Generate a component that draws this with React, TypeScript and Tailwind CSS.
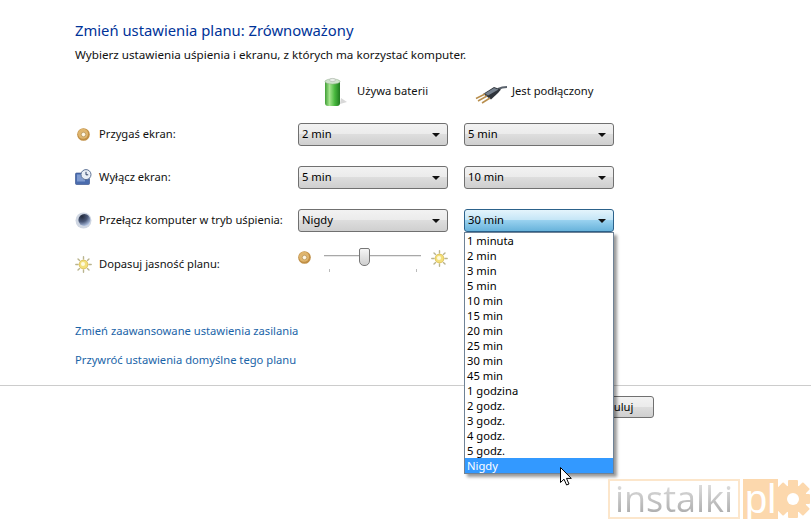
const FONT = "font-['Noto_Sans','Open_Sans',sans-serif]";

const plugOptions = [
  '1 minuta', '2 min', '3 min', '5 min', '10 min', '15 min', '20 min', '25 min',
  '30 min', '45 min', '1 godzina', '2 godz.', '3 godz.', '4 godz.', '5 godz.', 'Nigdy',
];

function DimIcon({ size = 13 }: { size?: number }) {
  return (
    <svg width={size} height={size} viewBox="0 0 14 14">
      <circle cx="7" cy="7" r="6.8" fill="#c08f45" />
      <circle cx="6.5" cy="6.3" r="5.4" fill="#dfb56e" />
      <circle cx="7" cy="7" r="2.4" fill="#fff8e6" stroke="#8f6a2c" strokeWidth="0.5" />
    </svg>
  );
}

function ScreenOffIcon() {
  return (
    <svg width="17" height="17" viewBox="0 0 17 17">
      <rect x="0.5" y="4" width="14" height="11.5" rx="1" fill="#4a6cae" stroke="#2f4a86" strokeWidth="0.6" />
      <rect x="2" y="5.5" width="8" height="7" fill="#7f9bd0" />
      <circle cx="11" cy="5.6" r="5" fill="#e8eef6" stroke="#5f7396" strokeWidth="1" />
      <path d="M11 2.8V5.8H13.2" fill="none" stroke="#2b3f66" strokeWidth="1" />
    </svg>
  );
}

function SleepIcon() {
  return (
    <svg width="17" height="17" viewBox="0 0 17 17">
      <defs>
        <radialGradient id="moon" cx="0.3" cy="0.2" r="1">
          <stop offset="0" stopColor="#232a3c" />
          <stop offset="0.45" stopColor="#4a5878" />
          <stop offset="0.85" stopColor="#b6c8e8" />
          <stop offset="1" stopColor="#dfe7f4" />
        </radialGradient>
      </defs>
      <circle cx="8.5" cy="8.5" r="8" fill="#cfd6e2" />
      <circle cx="9.4" cy="8" r="6" fill="url(#moon)" />
    </svg>
  );
}

function SunIcon({ size = 17 }: { size?: number }) {
  return (
    <svg width={size} height={size} viewBox="0 0 17 17">
      <g stroke="#b9b48e" strokeWidth="1.4" strokeLinecap="round">
        <path d="M8.5 0.8V3M8.5 14V16.2M0.8 8.5H3M14 8.5H16.2M3 3L4.6 4.6M12.4 12.4L14 14M14 3L12.4 4.6M4.6 12.4L3 14" />
      </g>
      <circle cx="8.5" cy="8.5" r="4.4" fill="#f3e07c" stroke="#d8b848" strokeWidth="0.8" />
      <circle cx="8" cy="8" r="2" fill="#fffbe0" />
    </svg>
  );
}

function BatteryIcon() {
  return (
    <svg width="24" height="30" viewBox="0 0 24 30">
      <defs>
        <linearGradient id="cell" x1="0" x2="1" y1="0" y2="0">
          <stop offset="0" stopColor="#3f9e35" />
          <stop offset="0.3" stopColor="#a5e58e" />
          <stop offset="0.65" stopColor="#48b83e" />
          <stop offset="1" stopColor="#1f7a1f" />
        </linearGradient>
      </defs>
      <path d="M16 27L23 25L17 21Z" fill="#d8d8d8" />
      <rect x="1" y="3" width="15" height="26" rx="3" fill="url(#cell)" />
      <ellipse cx="8.5" cy="4.5" rx="7.5" ry="2.6" fill="#cfe3cb" stroke="#8eaa88" strokeWidth="0.5" />
      <ellipse cx="8.5" cy="3" rx="3" ry="1.6" fill="#e9efe8" stroke="#a0a8a0" strokeWidth="0.5" />
    </svg>
  );
}

function PlugIcon() {
  return (
    <svg width="34" height="24" viewBox="0 0 34 24">
      <path d="M24 9C27 7.5 30 7 33 7" fill="none" stroke="#5a626c" strokeWidth="2" />
      <path d="M9 14L20 7L27 9.5L24 13L17 19.5Z" fill="#2f343b" />
      <path d="M11 13.5L20 8L24.5 9.5L14 15.5Z" fill="#76818e" />
      <g stroke="#b98f4e" strokeWidth="1.5">
        <path d="M11 14L2 18.5" />
        <path d="M13 16L4 21" />
        <path d="M16 18L8 23" />
      </g>
    </svg>
  );
}

function Select({ value, active = false }: { value: string; active?: boolean }) {
  return (
    <div
      className={`flex h-[23px] w-[150px] items-center justify-between rounded-[3px] border pl-[3px] pr-[6px] text-[11.2px] text-black ${
        active
          ? 'border-[#2c628b] bg-[linear-gradient(#e4f4fc_0%,#c4e5f6_48%,#98d1ef_50%,#68b3db_100%)]'
          : 'border-[#707070] bg-[linear-gradient(#f2f2f2_0%,#ebebeb_48%,#dddddd_50%,#cfcfcf_100%)]'
      }`}
    >
      <span>{value}</span>
      <span className="mr-px h-0 w-0 border-x-[4px] border-t-[4px] border-x-transparent border-t-[#111]" />
    </div>
  );
}

function SettingRow({
  icon,
  label,
  battery,
  plugged,
  active,
}: {
  icon: React.ReactNode;
  label: string;
  battery: string;
  plugged: string;
  active?: boolean;
}) {
  return (
    <div className="flex h-[23px] items-center">
      <div className="flex w-[223px] items-center">
        <span className="flex w-[24px] shrink-0 items-center">{icon}</span>
        <span className="text-[11.2px] text-[#111]">{label}</span>
      </div>
      <Select value={battery} />
      <div className="ml-[16px]">
        <Select value={plugged} active={active} />
      </div>
    </div>
  );
}

function Slider() {
  return (
    <div className="flex w-[150px] items-start">
      <span className="mt-[-1px] shrink-0">
        <DimIcon />
      </span>
      <div className="relative ml-[13px] mt-[3px] h-[20px] w-[97px]">
        <div className="h-[2px] border-t border-[#a8a8a8] bg-[#e8e8e8]" />
        <div className="absolute left-[35px] top-[-7px] h-[18px] w-[11px] rounded-b-[5px] rounded-t-[2px] border border-[#777] bg-[linear-gradient(#f6f6f6,#cfcfcf)]" />
        <div className="absolute left-[5px] top-[14px] h-[3px] w-px bg-[#bbb]" />
        <div className="absolute left-[92px] top-[14px] h-[3px] w-px bg-[#bbb]" />
      </div>
      <span className="ml-[10px] mt-[-2px] shrink-0">
        <SunIcon />
      </span>
    </div>
  );
}

function Watermark() {
  return (
    <div className="absolute left-[608px] top-[479px] flex h-[40px] items-stretch">
      <div className="flex w-[132px] items-center justify-center border-[2px] border-[#fce6cb] font-['Open_Sans',sans-serif] text-[36px] font-normal leading-none">
        <span className="bg-[linear-gradient(#e2e2e2,#a8a8a8)] bg-clip-text text-transparent">instalki</span>
      </div>
      <div className="ml-[3px] flex w-[35px] items-center justify-center bg-[#fcd8ad] font-['Liberation_Sans',sans-serif] text-[40px] leading-none text-white">
        pl
      </div>
      <svg width="33" height="40" viewBox="0 0 33 40">
        <g fill="#fcd8ad">
          <circle cx="15" cy="20" r="14" />
          <rect x="10" y="1" width="10" height="38" rx="1" />
          <rect x="0" y="15" width="32" height="10" rx="1" />
          <rect x="10" y="1" width="10" height="38" rx="1" transform="rotate(45 15 20)" />
          <rect x="10" y="1" width="10" height="38" rx="1" transform="rotate(-45 15 20)" />
          <rect x="0" y="10" width="10" height="20" />
        </g>
        <circle cx="15" cy="20" r="6" fill="#fff" />
      </svg>
    </div>
  );
}

function Cursor() {
  return (
    <svg className="absolute left-[560px] top-[467px]" width="13" height="20" viewBox="0 0 13 20">
      <path d="M0.5 0.5V15.5L4 12.2L6.6 18L9 17L6.5 11.4H11.3Z" fill="#fff" stroke="#000" strokeWidth="1" />
    </svg>
  );
}

export default function App() {
  return (
    <div className={`relative h-[531px] w-[811px] overflow-hidden bg-white ${FONT}`}>
      <div className="pl-[75px] pt-[20px]">
        <h1 className="text-[14.8px] leading-[20px] text-[#003399]">Zmień ustawienia planu: Zrównoważony</h1>
        <p className="mt-[7px] text-[11.65px] leading-[16px] text-[#111]">
          Wybierz ustawienia uśpienia i ekranu, z których ma korzystać komputer.
        </p>

        <div className="mt-[12px] flex h-[33px] items-center text-[11.2px] text-[#111]">
          <div className="ml-[249px] flex w-[150px] items-center">
            <BatteryIcon />
            <span className="ml-[9px]">Używa baterii</span>
          </div>
          <div className="flex items-center">
            <PlugIcon />
            <span className="ml-[4px]">Jest podłączony</span>
          </div>
        </div>

        <div className="mt-[15px] flex flex-col gap-[20px]">
          <SettingRow
            icon={
              <span className="ml-[2px]">
                <DimIcon />
              </span>
            }
            label="Przygaś ekran:"
            battery="2 min"
            plugged="5 min"
          />
          <SettingRow icon={<ScreenOffIcon />} label="Wyłącz ekran:" battery="5 min" plugged="10 min" />
          <SettingRow
            icon={<SleepIcon />}
            label="Przełącz komputer w tryb uśpienia:"
            battery="Nigdy"
            plugged="30 min"
            active
          />
          <div className="flex h-[23px] items-start">
            <div className="mt-[1px] flex h-[23px] w-[223px] items-center">
              <span className="flex w-[24px] shrink-0 items-center">
                <SunIcon />
              </span>
              <span className="text-[11.2px] text-[#111]">Dopasuj jasność planu:</span>
            </div>
            <Slider />
          </div>
        </div>

        <div className="mt-[48px] flex flex-col gap-[13px] text-[11.2px] leading-[16px] text-[#1a64a8]">
          <span>Zmień zaawansowane ustawienia zasilania</span>
          <span>Przywróć ustawienia domyślne tego planu</span>
        </div>
      </div>

      <div className="mt-[17px] h-px bg-[#cccccc]" />

      <div className="mt-[10px] flex justify-end pr-[157px]">
        <button className="h-[22px] w-[75px] rounded-[3px] border border-[#707070] bg-[linear-gradient(#f2f2f2_0%,#ebebeb_48%,#dddddd_50%,#cfcfcf_100%)] text-[11.2px] leading-none text-black">
          Anuluj
        </button>
      </div>

      <ul className="absolute left-[464px] top-[232px] w-[150px] border border-[#6f8296] bg-white text-[11.2px] leading-[15px] text-black shadow-[3px_3px_3px_rgba(0,0,0,0.4)]">
        {plugOptions.map((opt) => (
          <li key={opt} className={`h-[15px] pl-[2px] ${opt === 'Nigdy' ? 'bg-[#3399ff] text-white' : ''}`}>
            {opt}
          </li>
        ))}
      </ul>

      <Cursor />
      <Watermark />
    </div>
  );
}
